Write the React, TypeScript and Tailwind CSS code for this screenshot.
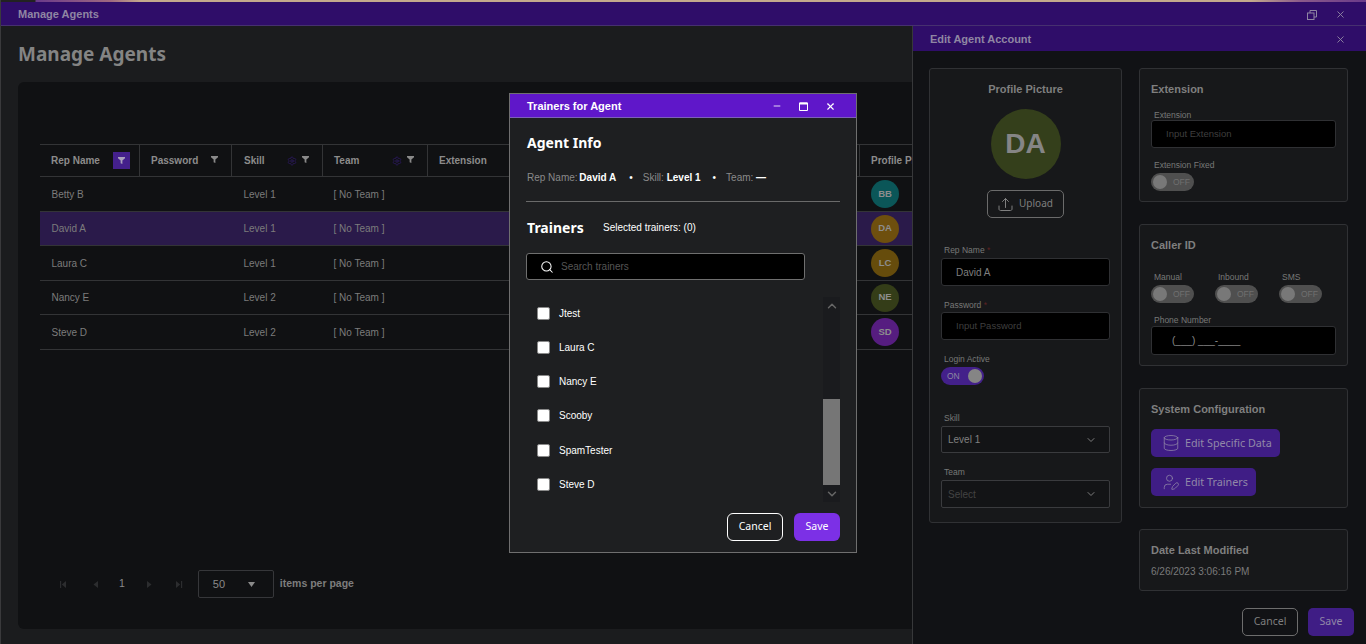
import React from "react";
import { ChevronDown, ChevronUp, Database, Search, UserPen, X, Minus, Settings } from "lucide-react";

const Funnel = ({ className = "text-[#8a8a8a]" }: { className?: string }) => (
  <svg width="7" height="7" viewBox="0 0 8 8" className={className}>
    <path d="M0 0H8V1.4L5 4V8L3 7V4L0 1.4Z" fill="currentColor" />
  </svg>
);

const HeadCell = ({ label, w, gear, active, pad = "pl-[11px]" }: { label: string; w: string; gear?: boolean; active?: boolean; pad?: string }) => (
  <div className={`${w} ${pad} h-full shrink-0 flex items-center border-r border-[#333436] text-[10px] font-bold text-[#8c8c8c]`}>
    <span className="whitespace-nowrap">{label}</span>
    <div className="ml-auto flex items-center">
      {gear && <Settings size={10} className="text-[#2c1b5e] mr-[5px] -ml-[4px]" />}
      {active ? (
        <div className="w-[17px] h-[17px] mr-[9px] bg-[#44208c] flex items-center justify-center">
          <Funnel className="text-[#a8a0bc]" />
        </div>
      ) : (
        <div className="mr-[13px] -mt-[2px] flex">
          <Funnel />
        </div>
      )}
    </div>
  </div>
);

const rows = [
  { n: "Betty B", s: "Level 1", a: "BB", c: "bg-[#0b5658]", h: "h-[35px]" },
  { n: "David A", s: "Level 1", a: "DA", c: "bg-[#6e4f0e]", h: "h-[34px]", sel: true },
  { n: "Laura C", s: "Level 1", a: "LC", c: "bg-[#664c0c]", h: "h-[35px]" },
  { n: "Nancy E", s: "Level 2", a: "NE", c: "bg-[#343d18]", h: "h-[34px]" },
  { n: "Steve D", s: "Level 2", a: "SD", c: "bg-[#561d80]", h: "h-[35px]" },
];

const Row = ({ r }: { r: (typeof rows)[number] }) => (
  <div className={`${r.h} w-[1000px] flex items-center border-b border-[#333436] text-[10px] text-[#7c7c7c] ${r.sel ? "bg-[#2a1a4a]" : ""}`}>
    <div className="w-[191px] pl-[11.5px] shrink-0">{r.n}</div>
    <div className="w-[90px] pl-[12.5px] shrink-0">{r.s}</div>
    <div className="w-[537px] pl-[12.5px] shrink-0">[ No Team ]</div>
    <div className={`${r.c} ml-[13px] w-[28px] h-[28px] rounded-full flex items-center justify-center text-[9.5px] font-bold text-[#8d8d8d]`}>{r.a}</div>
  </div>
);

const Tri = ({ d, className = "" }: { d: string; className?: string }) => (
  <svg width="7" height="7" viewBox="0 0 7 7" className={`text-[#2c2d2f] ${className}`}>
    <path d={d} fill="currentColor" />
  </svg>
);

const Panel = ({ className = "", children }: { className?: string; children: React.ReactNode }) => (
  <div className={`border border-[#303134] rounded-[3px] bg-[#17181a] ${className}`}>{children}</div>
);

const Label = ({ children, className = "" }: { children: React.ReactNode; className?: string }) => (
  <div className={`text-[8.5px] leading-[10px] text-[#787878] pl-[3px] ${className}`}>{children}</div>
);

const Req = () => <span className="text-[#5e2222]"> *</span>;

const Field = ({ children, className = "", h = "h-[28px]" }: { children: React.ReactNode; className?: string; h?: string }) => (
  <div className={`${h} bg-black border border-[#2f3033] rounded-[3px] flex items-center ${className}`}>{children}</div>
);

const Switch = ({ on }: { on?: boolean }) =>
  on ? (
    <div className="w-[43px] h-[18px] rounded-full bg-[#43208a] flex items-center justify-between pl-[6px] pr-[2px]">
      <span className="text-[8.5px] text-[#8d86a0]">ON</span>
      <span className="w-[14px] h-[14px] rounded-full bg-[#858585]" />
    </div>
  ) : (
    <div className="w-[43px] h-[18px] rounded-full bg-[#4f4f4f] flex items-center justify-between pl-[2px] pr-[4px]">
      <span className="w-[14px] h-[14px] rounded-full bg-[#787878]" />
      <span className="text-[8.5px] text-[#6f6f6f]">OFF</span>
    </div>
  );

const Select = ({ value, dim, h = "h-[27px]" }: { value: string; dim?: boolean; h?: string }) => (
  <div className={`${h} border border-[#3a3b3e] rounded-[2px] bg-[#131416] flex items-center justify-between pl-[6px] pr-[12px] text-[10px] ${dim ? "text-[#434343]" : "text-[#808080]"}`}>
    <span>{value}</span>
    <ChevronDown size={12} className="text-[#7d7d7d]" />
  </div>
);

const PurpleBtn = ({ w, icon, children }: { w: string; icon: React.ReactNode; children: React.ReactNode }) => (
  <div className={`${w} h-[28px] rounded-[5px] bg-[#3f1d85] flex items-center pl-[11px] gap-[5px] text-[10.75px] text-[#9188a8] font-['Noto_Sans',sans-serif]`}>
    {icon}
    <span className="whitespace-nowrap">{children}</span>
  </div>
);

const trainers = ["Jtest", "Laura C", "Nancy E", "Scooby", "SpamTester", "Steve D"];

export default function App() {
  return (
    <div className="relative w-[1366px] h-[644px] overflow-hidden bg-[#1b1c1e] font-['Liberation_Sans',sans-serif] flex flex-col border-l border-[#3a3a3c]">
      <div className="h-[2px] shrink-0 bg-[linear-gradient(90deg,#222_0,#222_34px,#6a3a8a_35px,#a06a80_110px,#c4a98c_140px,#c4a98c_1250px,#8a5a8a_1300px,#6a3a8a_100%)]" />
      <div className="h-[24px] shrink-0 bg-[#2f0d69] border-b border-[#46306f] flex items-center pt-[2px] pl-[17px] text-[#8f86a3]">
        <span className="text-[11px] font-bold">Manage Agents</span>
        <div className="ml-auto flex items-center gap-[18px] pr-[20px]">
          <svg width="10" height="10" viewBox="0 0 10 10" fill="none" stroke="#8f86a3" strokeWidth="1">
            <rect x="0.5" y="3" width="6.5" height="6.5" />
            <path d="M3 3V0.5H9.5V7H7" />
          </svg>
          <X size={11} strokeWidth={2} />
        </div>
      </div>

      <div className="flex-1 min-h-0 flex flex-col pl-[17px] pb-[15px]">
        <h1 className="h-[56px] shrink-0 flex items-center text-[19px] font-bold text-[#848484] font-['Noto_Sans',sans-serif]">Manage Agents</h1>
        <div className="flex-1 min-h-0 rounded-l-[6px] bg-[#101113] pl-[22px] pt-[62px] overflow-hidden">
          <div className="h-[33px] w-[1000px] flex items-center border-y border-[#333436]">
            <HeadCell label="Rep Name" w="w-[100px]" active />
            <HeadCell label="Password" w="w-[92px]" />
            <HeadCell label="Skill" w="w-[91px]" gear pad="pl-[12px]" />
            <HeadCell label="Team" w="w-[105px]" gear />
            <HeadCell label="Extension" w="w-[432px]" />
            <div className="pl-[11px] text-[10px] font-bold text-[#8c8c8c]">Profile Picture</div>
          </div>
          {rows.map((r) => (
            <Row key={r.n} r={r} />
          ))}
          <div className="mt-[220px] flex items-center h-[28px] text-[#7d7d7d]">
            <Tri className="ml-[20px]" d="M0 0H1.2V7H0ZM6 0V7L1.8 3.5Z" />
            <Tri className="ml-[25px]" d="M6 0V7L1.5 3.5Z" />
            <span className="ml-[20px] text-[10.5px] text-[#8a8a8a]">1</span>
            <Tri className="ml-[21px]" d="M1 0V7L5.5 3.5Z" />
            <Tri className="ml-[23px]" d="M0 0V7L4.2 3.5ZM5 0H6.2V7H5Z" />
            <div className="ml-[15px] w-[76px] h-[28px] border border-[#36373a] rounded-[2px] flex items-center pl-[14px] text-[11px] text-[#8a8a8a]">
              <span>50</span>
              <svg width="7" height="5" viewBox="0 0 7 5" className="ml-[23px]">
                <path d="M0 0H7L3.5 5Z" fill="#8a8a8a" />
              </svg>
            </div>
            <span className="ml-[6px] text-[10.5px] font-bold text-[#7d7d7d]">items per page</span>
          </div>
        </div>
      </div>

      {/* Edit Agent Account side panel */}
      <aside className="absolute left-[911px] top-[26px] bottom-0 w-[454px] bg-[#111215] border-l border-[#37383a] flex flex-col">
        <div className="h-[25px] shrink-0 bg-[#2f0d69] flex items-center pt-[1px] pl-[17px] pr-[20px] text-[#8f86a3]">
          <span className="text-[11px] font-bold">Edit Agent Account</span>
          <X size={11} strokeWidth={2} className="ml-auto" />
        </div>
        <div className="flex gap-[17px] pl-[16px] pt-[17px]">
          <Panel className="w-[193px] h-[455px] px-[11px] flex flex-col">
            <div className="mt-[14px] text-center text-[11px] leading-[13px] font-bold text-[#7f7f7f]">Profile Picture</div>
            <div className="mt-[13px] mx-auto w-[70px] h-[70px] rounded-full bg-[#343f1b] flex items-center justify-center text-[28px] font-bold text-[#858585]">DA</div>
            <div className="mt-[11px] mx-auto w-[77px] h-[28px] border border-[#6b6b6b] rounded-[5px] flex items-center justify-center gap-[6px] text-[10px] text-[#7f7f7f] font-['Noto_Sans',sans-serif]">
              <svg width="15" height="15" viewBox="0 0 15 15" fill="none" stroke="#7f7f7f" strokeWidth="1" strokeLinecap="round" strokeLinejoin="round">
                <path d="M7.5 10.5V1.5M4.5 4.5L7.5 1.5L10.5 4.5" />
                <path d="M1 9V12C1 13 1.8 13.5 2.5 13.5H12.5C13.2 13.5 14 13 14 12V9" />
              </svg>
              <span className="-mt-[1px]">Upload</span>
            </div>
            <Label className="mt-[27px]">Rep Name<Req /></Label>
            <Field className="mt-[3px] pl-[14px] text-[#7f7f7f] text-[10px]">David A</Field>
            <Label className="mt-[14px]">Password<Req /></Label>
            <Field className="mt-[2px] pl-[14px] text-[#3f3f3f] text-[9.5px]">Input Password</Field>
            <Label className="mt-[14px]">Login Active</Label>
            <div className="mt-[3px]"><Switch on /></div>
            <Label className="mt-[28px]">Skill</Label>
            <div className="mt-[3px]"><Select value="Level 1" /></div>
            <Label className="mt-[14px]">Team</Label>
            <div className="mt-[3px]"><Select value="Select" dim h="h-[28px]" /></div>
          </Panel>
          <div className="w-[209px] flex flex-col">
            <Panel className="h-[134px] px-[11px] flex flex-col">
              <div className="mt-[14px] text-[11px] leading-[13px] font-bold text-[#7f7f7f]">Extension</div>
              <Label className="mt-[14px]">Extension</Label>
              <Field className="pl-[14px] text-[#3f3f3f] text-[9.5px]">Input Extension</Field>
              <Label className="mt-[12px]">Extension Fixed</Label>
              <div className="mt-[3px]"><Switch /></div>
            </Panel>
            <Panel className="mt-[22px] h-[142px] px-[11px] flex flex-col">
              <div className="mt-[14px] text-[11px] leading-[13px] font-bold text-[#7f7f7f]">Caller ID</div>
              <div className="mt-[20px] flex gap-[21px]">
                {["Manual", "Inbound", "SMS"].map((l) => (
                  <div key={l} className="flex flex-col gap-[3px]">
                    <Label>{l}</Label>
                    <Switch />
                  </div>
                ))}
              </div>
              <Label className="mt-[12px]">Phone Number</Label>
              <Field className="mt-[1px] pl-[20px] text-[#8a8a8a] text-[10px]" h="h-[29px]">(___) ___-____</Field>
            </Panel>
            <Panel className="mt-[22px] h-[120px] px-[11px] flex flex-col">
              <div className="mt-[14px] text-[11px] leading-[13px] font-bold text-[#7f7f7f]">System Configuration</div>
              <div className="mt-[13px]">
                <PurpleBtn w="w-[129px]" icon={<Database size={18} strokeWidth={1} />}>Edit Specific Data</PurpleBtn>
              </div>
              <div className="mt-[11px]">
                <PurpleBtn w="w-[105px]" icon={<UserPen size={18} strokeWidth={1} />}>Edit Trainers</PurpleBtn>
              </div>
            </Panel>
            <Panel className="mt-[21px] h-[62px] px-[11px] flex flex-col">
              <div className="mt-[14px] text-[11px] leading-[13px] font-bold text-[#7f7f7f]">Date Last Modified</div>
              <div className="mt-[9px] text-[10px] leading-[11px] text-[#7a7a7a]">6/26/2023 3:06:16 PM</div>
            </Panel>
          </div>
        </div>
        <div className="mt-[17px] flex justify-end gap-[10px] pr-[12px] font-['Noto_Sans',sans-serif] text-[10.5px]">
          <div className="w-[56px] h-[28px] rounded-[5px] border border-[#6d6d6d] flex items-center justify-center text-[#7f7f7f]">Cancel</div>
          <div className="w-[46px] h-[28px] rounded-[5px] bg-[#3f1d85] flex items-center justify-center text-[#9188a8]">Save</div>
        </div>
      </aside>

      {/* Trainers modal */}
      <div className="absolute left-[508px] top-[93px] w-[348px] h-[460px] bg-[#1e1f21] border border-[#6f6f6f] flex flex-col text-white">
        <div className="h-[24px] shrink-0 bg-[#5f17c9] border-b border-[#7d5fb8] flex items-center pt-[1px] pl-[17px] pr-[20px]">
          <span className="text-[11px] font-bold">Trainers for Agent</span>
          <div className="ml-auto flex items-center gap-[17px]">
            <Minus size={10} strokeWidth={2} />
            <svg width="9" height="9" viewBox="0 0 9 9" fill="none" stroke="white">
              <path d="M0.5 1H8.5V8.5H0.5Z" />
              <path d="M0.5 1.5H8.5" strokeWidth="2" />
            </svg>
            <X size={11} strokeWidth={2.5} />
          </div>
        </div>
        <div className="pl-[16px] pr-[16px] flex flex-col flex-1 min-h-0">
          <h2 className="mt-[13px] h-[22px] flex items-center pl-[1px] text-[14px] font-bold font-['Noto_Sans',sans-serif]">Agent Info</h2>
          <div className="mt-[19px] pl-[1px] flex items-center text-[10px] leading-[12px] text-[#8a8a8a]">
            <span>Rep Name:&nbsp;</span><b className="text-white -ml-[1px]">David A</b>
            <span className="ml-[13px] mr-[10px] text-white">•</span>
            <span>Skill:&nbsp;</span><b className="text-white">Level 1</b>
            <span className="ml-[12px] mr-[10px] text-white">•</span>
            <span>Team:&nbsp;</span><b className="text-white">—</b>
          </div>
          <div className="mt-[17px] h-px bg-[#6a6a6a]" />
          <div className="mt-[14px] h-[22px] flex items-center pl-[1px]">
            <h2 className="w-[76px] text-[14px] font-bold font-['Noto_Sans',sans-serif]">Trainers</h2>
            <span className="text-[10px]">Selected trainers: (0)</span>
          </div>
          <div className="mt-[15px] w-[279px] h-[27px] bg-black border border-[#6f6f6f] rounded-[3px] flex items-center pl-[13px] gap-[7px] text-[10px] text-[#555]">
            <Search size={14} strokeWidth={1.75} className="text-white" />
            <span>Search trainers</span>
          </div>
          <div className="mt-[17px] flex">
            <div className="flex-1 pl-[11px] flex flex-col">
              {trainers.map((t, i) => (
                <div key={t} className={`flex items-center h-[13px] gap-[9px] text-[10px] ${i === 0 ? "mt-[10px]" : i === 4 ? "mt-[22px]" : "mt-[21px]"}`}>
                  <span className="w-[13px] h-[13px] bg-white rounded-[2px] border border-[#8a8a8a]" />
                  <span>{t}</span>
                </div>
              ))}
            </div>
            <div className="w-[17px] h-[205px] bg-[#1a1b1e] flex flex-col items-center">
              <div className="h-[17px] flex items-center"><ChevronUp size={14} strokeWidth={2.5} className="text-[#666]" /></div>
              <div className="mt-[85px] w-full h-[86px] bg-[#767676]" />
              <div className="h-[17px] flex items-center"><ChevronDown size={14} strokeWidth={2.5} className="text-[#666]" /></div>
            </div>
          </div>
          <div className="mt-[11px] flex justify-end gap-[11px] font-['Noto_Sans',sans-serif] text-[10.5px]">
            <div className="w-[56px] h-[28px] rounded-[6px] border border-white flex items-center justify-center">Cancel</div>
            <div className="w-[46px] h-[28px] rounded-[6px] bg-[#7c30e6] flex items-center justify-center">Save</div>
          </div>
        </div>
      </div>
    </div>
  );
}
